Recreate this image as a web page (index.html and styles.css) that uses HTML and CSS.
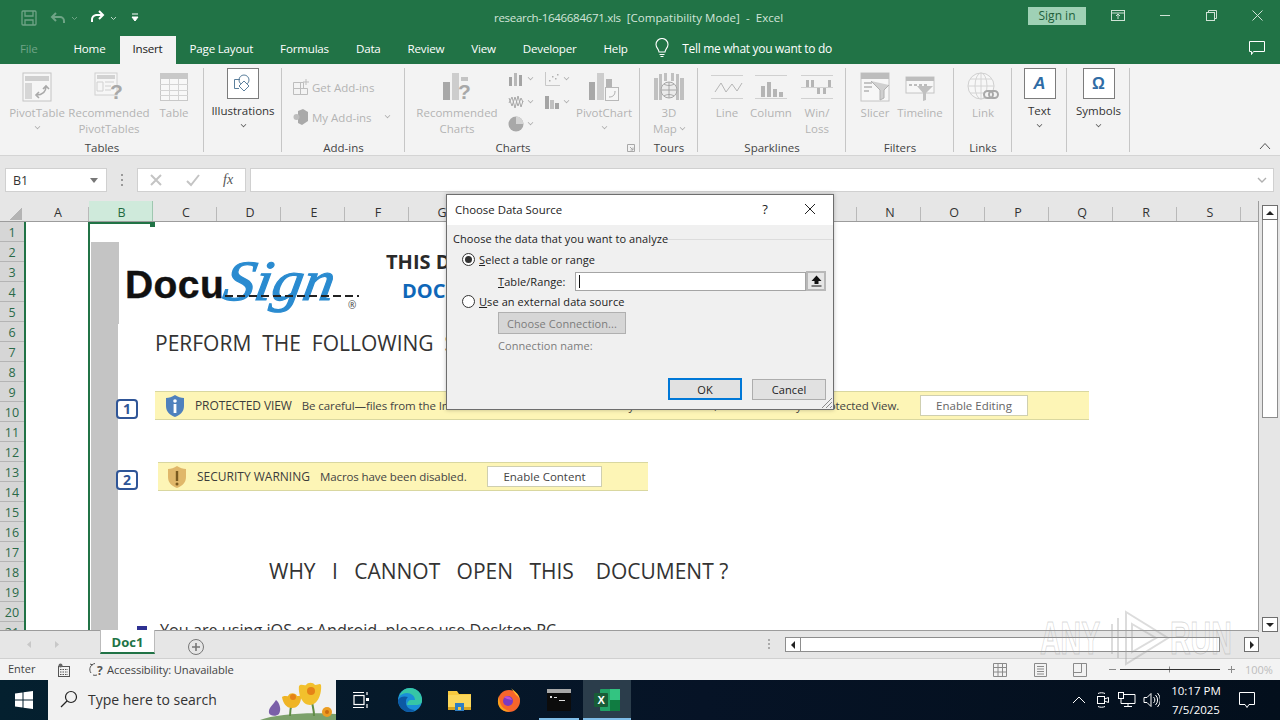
FILE: index.html
```html
<!DOCTYPE html>
<html lang="en">
<head>
<meta charset="utf-8">
<title>research-1646684671.xls [Compatibility Mode] - Excel</title>
<link rel="stylesheet" href="styles.css">
</head>
<body>
<div class="app">
  <header class="titlebar">
    <svg class="qat" width="494" height="36" viewBox="0 0 494 36" fill="none">
      <g stroke="#6fa486" stroke-width="1.3"><rect x="22" y="11" width="14" height="14" rx="1"/><path d="M25 11v5h8v-5M25 25v-5h8v5"/></g>
      <path d="M56 13l-4 4 4 4M52 17h8a4 4 0 0 1 4 4v2" stroke="#6fa486" stroke-width="2"/>
      <path d="M72 17l2.500 2.500L77 17" stroke="#6fa486"/>
      <path d="M99 11l4 4-4 4M103 15h-7a4.500 4.500 0 0 0-4 5v2" stroke="#fff" stroke-width="2"/>
      <path d="M111 17l2.500 2.500L116 17" stroke="#b9d5c4"/>
      <path d="M132 14h6M132 17h6l-3 4z" stroke="#fff" fill="#fff"/>
    </svg>
    <div class="doc-title"><span class="fname">research-1646684671.xls</span><span class="rest">[Compatibility Mode]&nbsp; -&nbsp; Excel</span></div>
    <button class="signin">Sign in</button>
    <svg class="winctl" width="194" height="36" viewBox="0 0 194 36" fill="none" stroke="#cfe3d6">
      <rect x="25.500" y="10.500" width="13" height="10"/><path d="M25.500 13h13M32 19v-5M30 16l2-2 2 2"/>
      <path d="M74 15.500h10"/>
      <rect x="120.500" y="12.500" width="8" height="8"/><path d="M122.500 12.500v-2h8v8h-2"/>
      <path d="M166.500 10.500l10 10M176.500 10.500l-10 10"/>
    </svg>
  </header>

  <nav class="tabs">
    <span class="tab tab-file">File</span>
    <span class="tab">Home</span>
    <span class="tab tab-active">Insert</span>
    <span class="tab">Page Layout</span>
    <span class="tab">Formulas</span>
    <span class="tab">Data</span>
    <span class="tab">Review</span>
    <span class="tab">View</span>
    <span class="tab">Developer</span>
    <span class="tab">Help</span>
    <svg class="bulb" width="16" height="20" viewBox="0 0 16 20" fill="none" stroke="#fff" stroke-width="1.100"><path d="M5 14c0-3-3-4-3-7.500a6 6 0 0 1 12 0C14 10 11 11 11 14zM5.500 16.500h5M6.500 18.500h3"/></svg>
    <span class="tell">Tell me what you want to do</span>
    <svg class="comment" width="18" height="18" viewBox="0 0 18 18" fill="none" stroke="#fff"><path d="M1.500 2.500h15v10H5.500l-2 3v-3h-2z"/></svg>
  </nav>

  <section class="ribbon">
    <div class="group g-tables">
      <div class="g-body">
        <div class="item w56 off">
          <svg class="ic" width="30" height="30" viewBox="0 0 30 30" fill="none"><rect x="1" y="1" width="28" height="28" fill="#f6f6f6" stroke="#c4c4c4"/><rect x="3" y="4" width="24" height="5" fill="#cfcfcf"/><rect x="3" y="11" width="7" height="16" fill="#d6d6d6"/><path d="M14 23c7 0 10-3 10-9M21 17l3-3 3 3M17 20l-3 3 3 3" stroke="#a9a9a9" stroke-width="1.600"/></svg>
          <span class="t">PivotTable</span><span class="chev"></span>
        </div>
        <div class="item w84 off">
          <svg class="ic" width="30" height="30" viewBox="0 0 30 30" fill="none"><rect x="1" y="1" width="22" height="22" fill="#f6f6f6" stroke="#d0d0d0"/><rect x="3" y="3" width="18" height="4" fill="#d2d2d2"/><path d="M3 10h6v9H3zM11 10h9M11 14h6M11 18h6" stroke="#d0d0d0"/><text x="16" y="27" class="svgq">?</text></svg>
          <span class="t">Recommended</span><span class="t">PivotTables</span>
        </div>
        <div class="item w28 off">
          <svg class="ic" width="28" height="30" viewBox="0 0 28 30" fill="none"><rect x="0.500" y="1.500" width="27" height="27" fill="#f8f8f8" stroke="#c8c8c8"/><rect x="0" y="1" width="28" height="6" fill="#c8c8c8"/><path d="M9.500 7v21M18.500 7v21M0 12.500h28M0 18.500h28M0 23.500h28" stroke="#d4d4d4"/></svg>
          <span class="t">Table</span>
        </div>
      </div>
      <div class="g-label">Tables</div>
    </div>

    <div class="group g-illus">
      <div class="g-body">
        <div class="item full">
          <div class="boxed">
            <svg width="20" height="20" viewBox="0 0 20 20" fill="none" stroke="#5b7f9c"><path d="M7 5.500H1.500v9H6"/><circle cx="11" cy="6" r="5"/><path d="M11 7l5 5-5 5-5-5z" fill="#fff"/></svg>
          </div>
          <span class="t dark">Illustrations</span><span class="chev dk"></span>
        </div>
      </div>
      <div class="g-label"></div>
    </div>

    <div class="group g-addins">
      <div class="g-body g-rows">
        <div class="row-item off">
          <svg width="16" height="18" viewBox="0 0 16 18" fill="none" stroke="#bdbdbd"><path d="M0.500 4.500h10v6h-10zM0.500 10.500h7v6h-7zM7.500 10.500h7v6h-7zM7.500 4.500v6M13 1v6M10 4h6"/></svg>
          <span class="t">Get Add-ins</span>
        </div>
        <div class="row-item off">
          <svg width="16" height="18" viewBox="0 0 16 18"><path d="M5 3l5-2 5 3v9l-6 4-4-2z" fill="#a9a9a9"/><circle cx="3.500" cy="9" r="3" fill="#bdbdbd"/></svg>
          <span class="t">My Add-ins</span><span class="chev side"></span>
        </div>
      </div>
      <div class="g-label">Add-ins</div>
    </div>

    <div class="group g-charts">
      <div class="g-body">
        <div class="item w84 off">
          <svg class="ic" width="30" height="30" viewBox="0 0 30 30"><rect x="1" y="10" width="7" height="18" fill="#a8a8a8"/><rect x="10" y="1" width="7" height="27" fill="#cdcdcd"/><rect x="19" y="5" width="7" height="4" fill="#c4c4c4"/><text x="16" y="27" class="svgq">?</text></svg>
          <span class="t">Recommended</span><span class="t">Charts</span>
        </div>
        <div class="minis">
          <div class="mini"><svg width="16" height="16" viewBox="0 0 16 16"><rect x="1" y="6" width="3" height="9" fill="#a4a4a4"/><rect x="6" y="2" width="3" height="13" fill="#b8b8b8"/><rect x="11" y="4" width="3" height="11" fill="#a4a4a4"/></svg><span class="chev side-s"></span></div>
          <div class="mini"><svg width="16" height="16" viewBox="0 0 16 16" fill="none"><path d="M1.500 1v13.500H16" stroke="#c8c8c8"/><g fill="#b0b0b0"><rect x="5" y="9" width="1.500" height="1.500"/><rect x="8" y="5" width="1.500" height="1.500"/><rect x="11" y="7" width="1.500" height="1.500"/><rect x="13" y="3" width="1.500" height="1.500"/></g></svg><span class="chev side-s"></span></div>
          <div class="mini"><svg width="16" height="16" viewBox="0 0 16 16" fill="none" stroke="#a8a8a8"><path d="M1 9l3-6 3 11 3-12 3 11 2-6M1 4l3 8 3-9 3 9 3-8 2 4"/></svg><span class="chev side-s"></span></div>
          <div class="mini"><svg width="16" height="16" viewBox="0 0 16 16"><rect x="1" y="2" width="4" height="13" fill="#a4a4a4"/><rect x="6" y="6" width="4" height="9" fill="#c0c0c0"/><rect x="11" y="9" width="4" height="6" fill="#a4a4a4"/></svg><span class="chev side-s"></span></div>
          <div class="mini"><svg width="16" height="16" viewBox="0 0 16 16"><circle cx="8" cy="8" r="7.500" fill="#a8a8a8"/><path d="M8 8V0.500a7.500 7.500 0 0 1 7.500 7.500z" fill="#d4d4d4"/></svg><span class="chev side-s"></span></div>
        </div>
        <div class="item w56 off">
          <svg class="ic" width="32" height="30" viewBox="0 0 32 30" fill="none"><rect x="1" y="10" width="6" height="18" fill="#a8a8a8"/><rect x="9" y="1" width="7" height="27" fill="#cdcdcd"/><rect x="18" y="7" width="6" height="8" fill="#b4b4b4"/><rect x="17.500" y="15.500" width="13" height="13" fill="#f6f6f6" stroke="#b8b8b8"/><path d="M21 25c4 0 6-2 6-6" stroke="#a8a8a8"/></svg>
          <span class="t">PivotChart</span><span class="chev"></span>
        </div>
      </div>
      <div class="g-label launcher"><span class="lb">Charts</span><svg width="8" height="8" viewBox="0 0 8 8" fill="none" stroke="#a8a8a8"><path d="M0.500 0.500h7v7h-7zM3 3l3 3M6 3.500V6H3.500"/></svg></div>
    </div>

    <div class="group g-tours">
      <div class="g-body">
        <div class="item full off">
          <svg class="ic" width="32" height="30" viewBox="0 0 32 30" fill="none"><g fill="#c0c0c0"><rect x="1" y="6" width="4" height="22"/><rect x="27" y="6" width="4" height="22"/><rect x="6" y="2" width="3" height="26"/><rect x="23" y="2" width="3" height="26"/><rect x="11" y="1" width="3" height="8"/><rect x="18" y="1" width="3" height="8"/></g><circle cx="16" cy="18" r="8" fill="#ebebeb" stroke="#a6a6a6"/><path d="M8 18h16M16 10v16M11 12c3 2 7 2 10 0M11 24c3-2 7-2 10 0" stroke="#a6a6a6"/></svg>
          <span class="t">3D</span><span class="t">Map <span class="chev inl"></span></span>
        </div>
      </div>
      <div class="g-label">Tours</div>
    </div>

    <div class="group g-spark">
      <div class="g-body">
        <div class="item w40 off">
          <svg class="ic" width="32" height="30" viewBox="0 0 32 30" fill="none"><path d="M0 3.500h32M0 26.500h32" stroke="#d0d0d0"/><path d="M4 20l6-9 5 9 6-8 5 7 5-8" stroke="#b5b5b5"/></svg>
          <span class="t">Line</span>
        </div>
        <div class="item w44 off">
          <svg class="ic" width="32" height="30" viewBox="0 0 32 30"><path d="M0 3.500h32M0 26.500h32" stroke="#d0d0d0"/><g fill="#b5b5b5"><rect x="6" y="14" width="4" height="11"/><rect x="12" y="10" width="4" height="15"/><rect x="18" y="17" width="4" height="8"/><rect x="24" y="20" width="4" height="5"/></g></svg>
          <span class="t">Column</span>
        </div>
        <div class="item w40 off">
          <svg class="ic" width="32" height="30" viewBox="0 0 32 30"><path d="M0 3.500h32M0 26.500h32M0 15.500h32" stroke="#d0d0d0"/><g fill="#b5b5b5"><rect x="5" y="8" width="3" height="7"/><rect x="10" y="8" width="3" height="7"/><rect x="16" y="16" width="3" height="6"/><rect x="22" y="16" width="3" height="6"/><rect x="27" y="8" width="3" height="7"/></g></svg>
          <span class="t">Win/</span><span class="t">Loss</span>
        </div>
      </div>
      <div class="g-label">Sparklines</div>
    </div>

    <div class="group g-filters">
      <div class="g-body">
        <div class="item w36 off">
          <svg class="ic" width="30" height="30" viewBox="0 0 30 30" fill="none"><rect x="1" y="1" width="28" height="28" fill="#f7f7f7" stroke="#c4c4c4"/><rect x="1" y="1" width="28" height="6" fill="#bdbdbd"/><path d="M4 11h8M4 15h8M4 19h5" stroke="#c4c4c4" stroke-width="2"/><path d="M11 9l9 9v10l4-2v-8l5-5" fill="#d0d0d0" stroke="#b0b0b0"/></svg>
          <span class="t">Slicer</span>
        </div>
        <div class="item w54 off">
          <svg class="ic" width="30" height="30" viewBox="0 0 30 30" fill="none"><rect x="1" y="5" width="28" height="16" fill="#f7f7f7" stroke="#c4c4c4"/><rect x="1" y="5" width="28" height="4" fill="#bdbdbd"/><path d="M4 13h3M9 13h3M14 13h3M19 13h3" stroke="#bdbdbd" stroke-width="2"/><path d="M12 14l7 0 9 0-7 7v7l-3 1v-8z" fill="#c0c0c0"/></svg>
          <span class="t">Timeline</span>
        </div>
      </div>
      <div class="g-label">Filters</div>
    </div>

    <div class="group g-links">
      <div class="g-body">
        <div class="item full off">
          <svg class="ic" width="32" height="30" viewBox="0 0 32 30" fill="none"><circle cx="14" cy="14" r="13" fill="#f7f7f7" stroke="#cfcfcf"/><path d="M1 14h26M14 1v26M3 7h22M3 21h22" stroke="#d4d4d4"/><ellipse cx="14" cy="14" rx="6" ry="13" stroke="#d4d4d4"/><rect x="17" y="19" width="9" height="7" rx="3.500" stroke="#a8a8a8" stroke-width="2" fill="#f3f3f3"/><rect x="22" y="19" width="9" height="7" rx="3.500" stroke="#a8a8a8" stroke-width="2"/></svg>
          <span class="t">Link</span>
        </div>
      </div>
      <div class="g-label">Links</div>
    </div>

    <div class="group g-text">
      <div class="g-body">
        <div class="item full">
          <div class="boxed glyph glyph-a">A</div>
          <span class="t dark">Text</span><span class="chev dk"></span>
        </div>
      </div>
      <div class="g-label"></div>
    </div>

    <div class="group g-symbols">
      <div class="g-body">
        <div class="item full">
          <div class="boxed glyph">Ω</div>
          <span class="t dark">Symbols</span><span class="chev dk"></span>
        </div>
      </div>
      <div class="g-label"></div>
    </div>

    <div class="collapse">
      <svg width="12" height="8" viewBox="0 0 12 8" fill="none" stroke="#555"><path d="M1 7l5-5.500L11 7"/></svg>
    </div>
  </section>

  <section class="formula">
    <div class="namebox"><span>B1</span><i class="tri"></i></div>
    <div class="fdots"></div>
    <div class="fbtns">
      <svg width="14" height="14" viewBox="0 0 14 14" fill="none" stroke="#c4c4c4" stroke-width="2"><path d="M2 2l10 10M12 2L2 12"/></svg>
      <svg width="14" height="14" viewBox="0 0 14 14" fill="none" stroke="#c4c4c4" stroke-width="2"><path d="M1 8l4 4 8-10"/></svg>
      <span class="fx">fx</span>
    </div>
    <div class="finput">
      <svg width="10" height="6" viewBox="0 0 10 6" fill="none" stroke="#b0b0b0" stroke-width="1.400"><path d="M1 1l4 4 4-4"/></svg>
    </div>
  </section>

  <section class="area">
    <div class="grid">
      <div class="cols">
        <div class="corner"><i></i></div>
        <div class="col">A</div><div class="col col-sel">B</div><div class="col">C</div><div class="col">D</div><div class="col">E</div><div class="col">F</div><div class="col">G</div><div class="col">H</div><div class="col">I</div><div class="col">J</div><div class="col">K</div><div class="col">L</div><div class="col">M</div><div class="col">N</div><div class="col">O</div><div class="col">P</div><div class="col">Q</div><div class="col">R</div><div class="col">S</div>
      </div>
      <div class="body">
        <div class="rows">
          <div class="rn">1</div><div class="rn">2</div><div class="rn">3</div><div class="rn">4</div><div class="rn">5</div><div class="rn">6</div><div class="rn">7</div><div class="rn">8</div><div class="rn">9</div><div class="rn">10</div><div class="rn">11</div><div class="rn">12</div><div class="rn">13</div><div class="rn">14</div><div class="rn">15</div><div class="rn">16</div><div class="rn">17</div><div class="rn">18</div><div class="rn">19</div><div class="rn">20</div><div class="rn">21</div>
        </div>
        <div class="cells">
          <div class="sel"></div>
          <div class="handle"></div>
          <div class="graybar"></div>
          <div class="graybar2"></div>

          <div class="logo">
            <span class="docu">Docu</span><span class="sign">Sign</span>
            <i class="dashes"></i><span class="reg">®</span>
          </div>

          <div class="h-this">THIS DOCUMENT</div>
          <div class="h-doc">DOCUMENT</div>
          <div class="h-perform">PERFORM&nbsp; THE&nbsp; FOLLOWING&nbsp; STEPS</div>

          <div class="badge b1">1</div>
          <div class="banner bn1">
            <svg class="shield" width="20" height="24" viewBox="0 0 20 24"><path d="M10 1c3 2 6 3 9 3v8c0 6-4 9-9 11-5-2-9-5-9-11V4c3 0 6-1 9-3z" fill="#4f81bd"/><rect x="8.600" y="10" width="2.800" height="9" fill="#fff"/><circle cx="10" cy="7" r="1.800" fill="#fff"/></svg>
            <span class="bn-title">PROTECTED VIEW</span>
            <span class="bn-msg">Be careful—files from the Internet can contain viruses. Unless you need to edit, it's safer to stay in Protected View.</span>
            <span class="bn-btn btn-edit">Enable Editing</span>
          </div>

          <div class="badge b2">2</div>
          <div class="banner bn2">
            <svg class="shield" width="20" height="24" viewBox="0 0 20 24"><path d="M10 1c3 2 6 3 9 3v8c0 6-4 9-9 11-5-2-9-5-9-11V4c3 0 6-1 9-3z" fill="#e0b76a"/><rect x="8.800" y="6" width="2.400" height="10" fill="#7a5a20"/><circle cx="10" cy="19" r="1.500" fill="#7a5a20"/></svg>
            <span class="bn-title t2">SECURITY WARNING</span>
            <span class="bn-msg">Macros have been disabled.</span>
            <span class="bn-btn btn-content">Enable Content</span>
          </div>

          <div class="h-why">WHY&nbsp;&nbsp; I&nbsp;&nbsp; CANNOT&nbsp;&nbsp; OPEN&nbsp;&nbsp; THIS&nbsp;&nbsp;&nbsp; DOCUMENT ?</div>
          <div class="bullet"></div>
          <div class="bullet-t">You are using iOS or Android, please use Desktop PC</div>
        </div>
      </div>
    </div>
    <div class="vscroll">
      <div class="sbtn"><i class="ar ar-up"></i></div>
      <div class="vthumb"></div>
      <div class="vtrack"></div>
      <div class="sbtn"><i class="ar ar-down"></i></div>
    </div>
  </section>

  <section class="sheetbar">
    <svg class="navs" width="100" height="27" viewBox="0 0 100 27" fill="#c8c8c8"><path d="M31 10v7l-4-3.500zM55 10v7l4-3.500z"/></svg>
    <div class="sheet-tab">Doc1</div>
    <svg class="plus" width="16" height="16" viewBox="0 0 16 16" fill="none" stroke="#777"><circle cx="8" cy="8" r="7.500"/><path d="M8 4v8M4 8h8" stroke-width="1.600"/></svg>
    <div class="sdots"></div>
    <div class="hscroll">
      <div class="hbtn"><i class="ar ar-left"></i></div>
    </div>
    <div class="hbtn hbtn-r"><i class="ar ar-right"></i></div>
  </section>

  <footer class="status">
    <span class="st-enter">Enter</span>
    <svg class="st-macro" width="14" height="14" viewBox="0 0 14 14" fill="none" stroke="#555"><rect x="1.500" y="3.500" width="11" height="10"/><path d="M3 6.500h8M3 9h8M3 11.500h8" stroke-dasharray="1.500 1"/><circle cx="3.500" cy="2.500" r="2" fill="#666" stroke="none"/></svg>
    <svg class="st-acc" width="17" height="15" viewBox="0 0 17 15" fill="none" stroke="#555"><path d="M6 1.500A6 6 0 0 0 2 11M4 13a6 6 0 0 0 4 0M1 2l3 1"/><text x="8" y="13" class="svgacc">?</text></svg>
    <span class="st-acc-t">Accessibility: Unavailable</span>
    <svg class="st-right" width="290" height="22" viewBox="0 0 290 22" fill="none" stroke="#8a8a8a">
      <path d="M3.500 4.500h13v13h-13zM3.500 8.500h13M3.500 13h13M8 4.500v13M12.500 4.500v13"/>
      <path d="M44.500 4.500h12v13h-12zM47 7.500h7M47 10h7M47 12.500h7M47 15h7"/>
      <path d="M83.500 4.500h13v13h-13zM83.500 13.500h8v-9"/>
      <path d="M119 10.500h7M179.500 7.500v6M238 10.500h7M241.500 7v7"/>
      <path d="M130 10.500h100" stroke="#333"/>
      <text x="255" y="15" class="svgpct">100%</text>
    </svg>
  </footer>

  <div class="taskbar">
    <div class="start">
      <svg width="18" height="18" viewBox="0 0 18 18" fill="#fff"><path d="M0 2.500l7.500-1v7H0zM8.500 1.300l9.500-1.300v8.500H8.500zM0 9.500h7.500v7l-7.500-1zM8.500 9.500H18V18l-9.500-1.300z"/></svg>
    </div>
    <div class="search">
      <svg width="18" height="18" viewBox="0 0 18 18" fill="none" stroke="#222" stroke-width="1.200"><circle cx="11" cy="7" r="5.500"/><path d="M7 11l-6 6"/></svg>
      <span>Type here to search</span>
      <svg class="flowers" width="76" height="40" viewBox="0 0 76 40">
        <path d="M0 40c15-6 50-8 76-6v6z" fill="#7ca16b"/>
        <path d="M16 20c3 2 6 9 3 14-3 3-9 2-10-1-1-5 4-8 7-13z" fill="#7a5fa8"/>
        <path d="M30 36c0-6 1-10 2-14M54 36c0-6-1-8-2-14" stroke="#5f8d45" stroke-width="2"/>
        <path d="M22 17c3-2 5 0 6-1 2-4 8-3 9 0 2 0 4-1 4 1 0 6-3 11-9 11s-9-5-10-11z" fill="#efb425"/>
        <circle cx="33" cy="17" r="3" fill="#e58217"/>
        <path d="M39 6c2-3 5 0 7-1 2-3 7-3 9 0 3 0 5-2 6 0 1 8-3 20-11 20S38 14 39 6z" fill="#f2c02d"/>
        <circle cx="51" cy="11" r="4" fill="#e58217"/>
        <circle cx="67" cy="32" r="5" fill="#ec9d22"/><circle cx="67" cy="32" r="2" fill="#c96c12"/>
      </svg>
    </div>
    <div class="tb-icons">
      <div class="tb"><svg width="16" height="20" viewBox="0 0 16 20" fill="none" stroke="#fff" stroke-width="1.200"><rect x="1" y="5.500" width="10" height="9"/><path d="M0 2.500h11M0 17.500h11M14 2v3M14 14v4"/><rect x="13" y="8" width="3" height="3" fill="#fff" stroke="none"/></svg></div>
      <div class="tb tb-wide"><svg width="24" height="24" viewBox="0 0 24 24"><circle cx="12" cy="12" r="12" fill="#1a8fd8"/><path d="M12 0a12 12 0 0 1 12 13c0 3-3 4-6 4H9c0-3 2-5 4-5h4c0-4-4-7-8-7-3 0-6 1-8 4C3 3 7 0 12 0z" fill="#36c6a6"/><path d="M8 13c-1 5 3 9 9 9-2 1-3 2-5 2A12 12 0 0 1 0 12c2-4 7-4 10-3-1 1-2 2-2 4z" fill="#0c59a4"/></svg></div>
      <div class="tb"><svg width="23" height="22" viewBox="0 0 23 22"><path d="M0 2h9l2 3h12v16H0z" fill="#f7c93f"/><rect x="0" y="6" width="23" height="15" fill="#fbd75b"/><rect x="0" y="18" width="23" height="3" fill="#d9a520"/><rect x="7" y="14" width="9" height="8" fill="#2f7fc4"/><rect x="10" y="18" width="3" height="3" fill="#f7c93f"/></svg></div>
      <div class="tb tb-wide"><svg width="24" height="24" viewBox="0 0 24 24"><circle cx="12" cy="13" r="11" fill="#f7652b"/><path d="M14 0c3 3 9 6 9 14 0-3-2-6-4-7z" fill="#ffbd2e"/><path d="M2 8c0 8 4 14 11 15-5 2-13-2-12-11z" fill="#f9a11b"/><circle cx="11" cy="13" r="5" fill="#7a3ac1"/><path d="M7 9c3-2 7 0 8 3-3-1-5 0-8-3z" fill="#c24fd0"/></svg></div>
      <div class="tb tb-cmd"><svg width="24" height="22" viewBox="0 0 24 22"><rect width="24" height="22" fill="#0c0c0c"/><rect width="24" height="4" fill="#a8a8a8"/><path d="M3 7h2v2H3zM7 8h3v1H7zM12 11h6v1h-6z" fill="#ddd"/></svg></div>
      <div class="tb tb-xl"><svg width="26" height="24" viewBox="0 0 26 24"><rect x="6" y="1" width="20" height="22" rx="1" fill="#21a366"/><rect x="16" y="1" width="10" height="11" fill="#33c481"/><rect x="16" y="12" width="10" height="11" fill="#107c41"/><rect x="0" y="5" width="14" height="14" rx="1" fill="#185c37"/><text x="3.500" y="16" class="svgx">X</text></svg></div>
    </div>
    <div class="tray">
      <svg width="14" height="8" viewBox="0 0 14 8" fill="none" stroke="#fff"><path d="M1 7l6-6 6 6"/></svg>
      <svg class="tray-meet" width="14" height="18" viewBox="0 0 14 18" fill="none" stroke="#fff"><rect x="1.500" y="5.500" width="7" height="7"/><path d="M8.500 8l4-1.500v5l-4-1.500M2 2.500c2-1 5-1 7 0M2 15.500c2 1 5 1 7 0"/></svg>
      <svg class="tray-net" width="18" height="16" viewBox="0 0 18 16" fill="none" stroke="#fff"><path d="M3 2.500h14v9H3zM10 11.500v3M6 14.500h8"/><rect x="0.500" y="0.500" width="5" height="6" fill="#0b1725"/></svg>
      <svg class="tray-vol" width="17" height="16" viewBox="0 0 17 16" fill="none" stroke="#fff"><path d="M1 5.500h3l4-4v13l-4-4H1zM10.500 5a4 4 0 0 1 0 6M12.500 3a7 7 0 0 1 0 10M14.500 1a10 10 0 0 1 0 14"/></svg>
      <div class="clock"><span>10:17 PM</span><span>7/5/2025</span></div>
      <svg class="tray-note" width="16" height="16" viewBox="0 0 16 16" fill="none" stroke="#fff"><path d="M0.500 0.500h15v12H10l-2 3-2-3H0.500z"/></svg>
    </div>
  </div>

  <div class="dialog">
    <div class="dlg-title">
      <span class="dlg-name">Choose Data Source</span>
      <span class="dlg-q">?</span>
      <svg class="dlg-x" width="12" height="12" viewBox="0 0 12 12" fill="none" stroke="#222"><path d="M1 1l10 10M11 1L1 11"/></svg>
    </div>
    <div class="dlg-body">
      <div class="dlg-legend"><span>Choose the data that you want to analyze</span><i></i></div>
      <label class="radio-row first"><i class="radio on"></i><span><u>S</u>elect a table or range</span></label>
      <div class="range-row">
        <span class="range-l"><u>T</u>able/Range:</span>
        <div class="range-in"><i class="caret"></i></div>
        <div class="range-b"><svg width="11" height="12" viewBox="0 0 11 12"><path d="M5.500 0.500L10.500 6H7.500v3h-4V6H0.500zM0.500 10.500h10v1h-10z" fill="#111"/></svg></div>
      </div>
      <label class="radio-row"><i class="radio"></i><span><u>U</u>se an external data source</span></label>
      <button class="conn-btn">Choose Connection...</button>
      <div class="conn-name">Connection name:</div>
      <div class="dlg-foot">
        <button class="dbtn dbtn-ok">OK</button>
        <button class="dbtn">Cancel</button>
      </div>
    </div>
    <svg class="grip" width="12" height="12" viewBox="0 0 12 12" fill="none" stroke="#8a8a8a"><path d="M11 1L1 11M11 5l-6 6M11 9l-2 2"/></svg>
  </div>

  <div class="watermark">
    <span class="wm-t">ANY</span>
    <svg width="60" height="56" viewBox="0 0 60 56" fill="none" stroke="#9a9a9a" stroke-opacity=".35" stroke-width="2"><path d="M2 14v30M8 8v40M16 2l42 26-42 26zM22 14l24 14-24 14z"/></svg>
    <span class="wm-t">RUN</span>
  </div>
</div>
</body>
</html>
```
FILE: styles.css
```css
* { box-sizing: border-box; }
html, body { margin: 0; padding: 0; }
body { font-family: "Open Sans", "Noto Sans", sans-serif; font-size: 12px; color: #333; background: #fff; }
.app { width: 1280px; height: 720px; position: relative; overflow: hidden; display: flex; flex-direction: column; }

.titlebar { height: 36px; background: #217346; display: flex; align-items: center; color: #fff; flex: none; }
.qat { flex: none; }
.doc-title { font-size: 11.500px; color: #d3e5da; flex: 1; white-space: nowrap; padding-bottom: 1px; }
.fname { letter-spacing: -.3px; margin-right: 6px; }
.rest { letter-spacing: .05px; }
.signin { width: 58px; height: 18px; margin-top: -4px; border: 0; padding: 0 0 2px; background: #9fd1b5; color: #1d5f3b; font: 12px "Open Sans", sans-serif; }
.winctl { flex: none; }

.tabs { height: 28px; background: #217346; display: flex; color: #fff; flex: none; align-items: stretch; }
.tab { display: flex; align-items: center; padding: 0 13.500px 4px; font-size: 11.600px; letter-spacing: -.2px; }
.tab-file { width: 60px; padding-left: 20px; color: #6fa486; }
.tab-active { background: #f3f3f3; color: #222; padding: 0 13px 4px 12px; margin: 0 .5px 0 1.500px; }
.bulb { align-self: center; margin: 0 0 4px 13px; }
.tell { align-self: center; margin: 0 0 4px 12px; letter-spacing: -.3px; }
.comment { align-self: center; margin: 0 14px 4px auto; }

.ribbon { height: 92px; background: #f3f3f3; border-bottom: 1px solid #d4d4d4; display: flex; flex: none; }
.group { display: flex; flex-direction: column; padding-top: 8px; flex: none; background: linear-gradient(#c6c6c6, #c6c6c6) right 0 top 4px / 1px 84px no-repeat; }
.g-body { height: 69px; display: flex; align-items: flex-start; }
.g-label { height: 14px; line-height: 14px; text-align: center; color: #444; font-size: 11.500px; }
.g-tables { width: 204px; } .g-tables .g-body { padding-left: 9px; gap: 2px; } .g-tables .w28 { margin-left: 7px; }
.g-illus { width: 78px; }
.g-addins { width: 123px; }
.g-charts { width: 235px; }
.g-charts .g-body { padding-left: 10px; }
.g-tours { width: 58px; }
.g-spark { width: 148px; } .g-spark .g-body { padding-left: 9px; gap: 2px; } .g-spark .w40:last-child { margin-left: 2px; }
.g-filters { width: 108px; } .g-filters .g-body { padding-left: 11px; }
.g-links { width: 58px; }
.g-text { width: 55px; }
.g-symbols { width: 63px; }
.launcher { display: flex; align-items: center; padding-right: 5px; }
.launcher .lb { flex: 1; padding-left: 2px; padding-right: 8px; }

.item { display: flex; flex-direction: column; align-items: center; flex: none; line-height: 16px; }
.w28 { width: 28px; } .w36 { width: 36px; } .w40 { width: 40px; } .w44 { width: 44px; } .w54 { width: 54px; } .w56 { width: 56px; } .w84 { width: 84px; }
.full { width: 100%; }
.ic { height: 30px; margin-bottom: 3px; flex: none; }
.t { white-space: nowrap; font-size: 11.500px; }
.off { color: #b3b3b3; }
.off .t, .row-item .t { color: #b3b3b3; }
.dark { color: #333; }
.chev { width: 5px; height: 5px; border-right: 1px solid #aaa; border-bottom: 1px solid #aaa; transform: rotate(45deg) scale(.8); margin-top: 3px; flex: none; }
.chev.dk { border-color: #555; }
.chev.inl { display: inline-block; margin: 0 0 3px 0; }
.chev.side { margin: 0 0 3px 10px; }
.chev.side-s { margin: 0 0 3px 4px; }
.boxed { width: 32px; height: 31px; margin-top: -4px; margin-bottom: 4px; background: #fff; border: 1px solid #7c7c7c; display: flex; align-items: center; justify-content: center; flex: none; }
.glyph { color: #2f6ca5; font: bold 16px "Liberation Sans", sans-serif; }
.glyph-a { font-style: italic; font-size: 17px; }
.g-rows { flex-direction: column; padding-left: 11px; }
.row-item { height: 30px; display: flex; align-items: center; gap: 3px; }
.minis { width: 70px; margin: -4px -2px 0 9px; display: grid; grid-template-columns: 36px 34px; grid-auto-rows: 22.500px; }
.mini { display: flex; align-items: center; }
.collapse { flex: 1; display: flex; justify-content: flex-end; align-items: flex-end; padding: 0 9px 5px 0; }
.svgq { font: bold 21px "Liberation Sans", sans-serif; fill: #a8a8a8; }

.formula { height: 45px; background: #e6e6e6; display: flex; padding-top: 12px; flex: none; align-items: flex-start; }
.namebox { width: 102px; height: 24px; margin-left: 5px; background: #fff; border: 1px solid #d0d0d0; display: flex; align-items: center; justify-content: space-between; padding: 0 8px 0 7px; font-size: 12.500px; color: #333; }
.tri { width: 0; height: 0; border: 4.500px solid transparent; border-top: 5px solid #777; border-bottom: 0; }
.fdots { width: 2px; height: 12px; margin: 6px 14px 0 14px; background: repeating-linear-gradient(#999 0 2px, transparent 2px 5px); }
.fbtns { width: 109px; height: 24px; background: #fff; border: 1px solid #d0d0d0; display: flex; align-items: center; padding-left: 11px; gap: 23px; }
.fx { font: italic 14px "Liberation Serif", serif; color: #555; }
.finput { width: 1024px; height: 24px; margin-left: 4px; background: #fff; border: 1px solid #d0d0d0; display: flex; align-items: center; justify-content: flex-end; padding-right: 6px; }

.area { height: 429px; display: flex; flex: none; align-items: flex-start; position: relative; z-index: 1; }
.grid { width: 1258px; height: 429px; display: flex; flex-direction: column; overflow: hidden; }
.cols { height: 21px; background: #e6e6e6; border-bottom: 1px solid #9c9c9c; display: flex; flex: none; }
.corner { width: 25px; padding: 7px 3px 0 10px; }
.corner i { display: block; width: 12px; height: 12px; background: linear-gradient(135deg, transparent 50%, #b4b4b4 50%); }
.col { width: 64px; padding-left: 2px; text-align: center; line-height: 23px; font-size: 12.500px; color: #333; background: linear-gradient(#b9b9b9, #b9b9b9) right bottom / 1px 14px no-repeat; }
.col-sel { background: #cfeadb; color: #1f6a41; border-right: 1px solid #9fc7b0; }
.body { flex: 1; display: flex; background: #fff; min-height: 0; }
.rows { width: 26px; flex: none; background: #d6d6d6; border-right: 2px solid #217346; }
.rn { height: 20px; line-height: 22px; text-align: center; font-size: 12.500px; color: #2a6a48; border-bottom: 1px solid #b4b4b4; }
.cells { flex: 1; position: relative; margin-left: -1px; }

.sel { position: absolute; left: 63px; top: 0; width: 64px; height: 420px; border-left: 2px solid #217346; border-top: 2px solid #217346; }
.handle { position: absolute; left: 125px; top: 0; width: 5px; height: 5px; background: #217346; }
.graybar { position: absolute; left: 66px; top: 20px; width: 28px; height: 82px; background: #c4c4c4; }
.graybar2 { position: absolute; left: 66px; top: 102px; width: 27px; height: 320px; background: #c4c4c4; }

.logo { position: absolute; left: 100px; top: 32px; width: 240px; height: 64px; }
.docu { position: absolute; left: 0; top: 9px; font: bold 39px/44px "Liberation Sans", sans-serif; color: #111; letter-spacing: .4px; -webkit-text-stroke: .4px #111; }
.sign { position: absolute; left: 100px; top: -8px; font: italic 62px/70px "Liberation Serif", serif; color: #2a8bd0; -webkit-text-stroke: 1.300px #2a8bd0; transform: skewX(-10deg) scaleY(.92); transform-origin: left center; }
.dashes { position: absolute; left: 100px; top: 41px; width: 134px; height: 2px; background: repeating-linear-gradient(90deg, #222 0 8px, transparent 8px 12px); }
.reg { position: absolute; left: 223px; top: 44px; font-size: 10px; color: #444; }

.h-this { position: absolute; left: 361px; top: 27px; font-size: 20px; font-weight: 700; line-height: 26px; color: #2a2a2a; white-space: nowrap; }
.h-doc { position: absolute; left: 377px; top: 56px; font-size: 20px; font-weight: 700; line-height: 26px; color: #0f67b8; white-space: nowrap; }
.h-perform { position: absolute; left: 130px; top: 106px; font-size: 21px; line-height: 30px; color: #333; white-space: nowrap; }

.badge { position: absolute; left: 91px; width: 22px; height: 20px; border: 2px solid #2f5597; border-radius: 4px; color: #2f5597; font: bold 14px/16px "Open Sans", sans-serif; text-align: center; }
.b1 { top: 177px; }
.b2 { top: 248px; }
.banner { position: absolute; display: flex; align-items: center; background: #fdf5b6; border-top: 1px solid #d9d7a0; border-bottom: 1px solid #d9d7a0; white-space: nowrap; }
.bn1 { left: 130px; top: 169px; width: 934px; height: 29px; padding-left: 10px; }
.bn2 { left: 133px; top: 240px; width: 490px; height: 29px; padding-left: 9px; }
.shield { flex: none; }
.bn-title { margin-left: 10px; font-size: 12px; color: #3c3c3c; letter-spacing: -.1px; }
.bn-msg { margin-left: 10px; font-size: 11.500px; color: #444; letter-spacing: -.1px; }
.t2 { letter-spacing: 0; }
.bn-btn { background: #fff; border: 1px solid #cfcfb0; height: 21px; display: flex; align-items: center; justify-content: center; font-size: 11.500px; color: #444; flex: none; }
.btn-edit { width: 108px; position: absolute; left: 765px; top: 3px; color: #666; }
.btn-content { width: 115px; position: absolute; left: 329px; top: 3px; }

.h-why { position: absolute; left: 244px; top: 334px; font-size: 21px; line-height: 30px; color: #333; white-space: nowrap; }
.bullet { position: absolute; left: 112px; top: 404px; width: 10px; height: 10px; background: #2e3192; }
.bullet-t { position: absolute; left: 135px; top: 397px; font-size: 16.200px; line-height: 22px; color: #333; white-space: nowrap; }

.vscroll { width: 22px; height: 431px; flex: none; background: #e6e6e6; border-left: 1px solid #9c9c9c; padding: 4px 2px 0 3px; display: flex; flex-direction: column; }
.sbtn { height: 15px; background: #fff; border: 1px solid #6f6f6f; display: flex; align-items: center; justify-content: center; flex: none; }
.vthumb { height: 198px; background: #fff; border: 1px solid #8d8d8d; border-top: 0; flex: none; }
.vtrack { flex: 1; }
.ar { display: block; width: 0; height: 0; border: 4px solid transparent; }
.ar-up { border-bottom: 4px solid #222; border-top: 0; }
.ar-down { border-top: 4px solid #222; border-bottom: 0; }
.ar-left { border-right: 4px solid #222; border-left: 0; }
.ar-right { border-left: 4px solid #222; border-right: 0; }

.sheetbar { height: 28px; background: #e6e6e6; border-top: 1px solid #9c9c9c; display: flex; align-items: flex-start; flex: none; }
.navs { flex: none; }
.sheet-tab { width: 55px; height: 24px; margin-top: -1px; background: #fff; border-bottom: 2px solid #217346; border-left: 1px solid #bbb; border-right: 1px solid #bbb; color: #217346; font-weight: 700; font-size: 13px; line-height: 24px; text-align: center; }
.plus { margin: 8px 0 0 33px; flex: none; }
.sdots { width: 2px; height: 12px; margin: 8px 15px 0 564px; background: repeating-linear-gradient(#aaa 0 2px, transparent 2px 4px); }
.hscroll { width: 435px; height: 15px; margin-top: 6px; background: #fff; border: 1px solid #8d8d8d; flex: none; }
.hbtn { width: 15px; height: 13px; background: #fff; border-right: 1px solid #8d8d8d; display: flex; align-items: center; justify-content: center; }
.hbtn-r { height: 15px; margin: 6px 0 0 24px; border: 1px solid #6f6f6f; }

.status { height: 22px; background: #f3f3f3; display: flex; align-items: center; border-top: 1px solid #d0d0d0; flex: none; font-size: 11px; color: #444; }
.st-enter { margin-left: 8px; width: 49px; padding-bottom: 2px; }
.st-macro { margin-right: 18px; }
.st-acc-t { margin-left: 1px; font-size: 11.200px; letter-spacing: -.1px; }
.st-right { margin-left: auto; flex: none; }
.svgacc { font: bold 12px "Open Sans", sans-serif; fill: #555; stroke: none; }
.svgpct { font: 11px "Open Sans", sans-serif; fill: #bdbdbd; stroke: none; }

.taskbar { height: 40px; background: linear-gradient(90deg, #04202f, #061326 55%, #030f1c); display: flex; flex: none; align-items: stretch; }
.start { width: 48px; display: flex; align-items: center; justify-content: center; }
.search { width: 288px; background: #f1f1f1; display: flex; align-items: center; padding: 0 0 2px 12px; gap: 10px; position: relative; overflow: hidden; font-size: 14px; color: #333; }
.flowers { position: absolute; right: 0; top: 0; }
.tb-icons { display: flex; }
.tb { width: 49px; display: flex; align-items: center; justify-content: center; }
.tb-wide { width: 50px; }
.tb-cmd { background: linear-gradient(#7fbde8, #7fbde8) center bottom / 40px 2px no-repeat; }
.tb-xl { width: 48px; background: linear-gradient(#7fbde8, #7fbde8) center bottom / 48px 2px no-repeat, #2b3d4b; }
.svgx { font: bold 11px "Liberation Sans", sans-serif; fill: #fff; }
.tray { margin-left: auto; display: flex; align-items: center; color: #fff; padding-right: 25px; }
.tray-meet { margin-left: 10px; }
.tray-net { margin-left: 8px; }
.tray-vol { margin-left: 7px; }
.clock { display: flex; flex-direction: column; align-items: center; margin-left: 11px; width: 50px; font-size: 11.500px; line-height: 19px; white-space: nowrap; }
.tray-note { margin-left: 18px; }

.dialog { position: absolute; left: 446px; top: 194px; width: 388px; height: 216px; background: #f0f0f0; border: 1px solid #6e6e6e; box-shadow: 0 0 4px rgba(0,0,0,.25); z-index: 5; display: flex; flex-direction: column; font-size: 11px; color: #222; letter-spacing: .08px; }
.dlg-title { height: 30px; background: #fff; display: flex; align-items: center; padding: 0 0 2px 8px; flex: none; }
.dlg-name { font-size: 11.400px; letter-spacing: 0; flex: 1; }
.dlg-q { font-size: 13px; margin-right: 36px; }
.dlg-x { margin-right: 17px; }
.dlg-body { padding: 7px 7px 0 6px; flex: 1; }
.dlg-legend { display: flex; align-items: center; line-height: 14px; height: 14px; }
.dlg-legend i { flex: 1; height: 1px; background: #dcdcdc; margin-right: -7px; }
.radio-row { display: flex; align-items: center; gap: 4px; height: 14px; margin: 6px 0 0 9px; }
.radio-row + .range-row + .radio-row { margin-top: 3px; }
.radio { width: 13px; height: 13px; border-radius: 50%; border: 1px solid #333; background: #fff; display: flex; align-items: center; justify-content: center; flex: none; }
.radio.on::after { content: ""; width: 7px; height: 7px; border-radius: 50%; background: #333; }
.range-row { display: flex; align-items: center; height: 20px; margin: 5px 0 0 45px; }
.range-l { width: 77px; }
.range-in { width: 231px; height: 19px; background: #fff; border: 1px solid #a5a5a5; display: flex; align-items: center; padding-left: 3px; }
.caret { width: 1px; height: 13px; background: #111; }
.range-b { width: 20px; height: 20px; background: #e6e6e6; border: 2px solid #b8b8b8; display: flex; align-items: center; justify-content: center; }
.conn-btn { display: block; width: 128px; height: 22px; margin: 4px 0 0 45px; padding: 0; background: #d6d6d6; border: 1px solid #b0b0b0; color: #7c7c7c; font: 11px "Open Sans", sans-serif; letter-spacing: .08px; }
.conn-name { margin: 5px 0 0 45px; line-height: 14px; color: #7c7c7c; }
.dlg-foot { display: flex; justify-content: flex-end; align-items: center; gap: 10px; margin-top: 25px; }
.dbtn { width: 74px; height: 21px; padding: 0; background: #e1e1e1; border: 1px solid #adadad; color: #222; font: 11px "Open Sans", sans-serif; letter-spacing: .08px; }
.dbtn-ok { height: 22px; border: 2px solid #0078d7; }
.grip { position: absolute; right: 0; bottom: 0; }

.watermark { position: absolute; left: 1040px; top: 609px; width: 200px; height: 58px; display: flex; align-items: center; pointer-events: none; z-index: 6; }
.wm-t { font: bold 46px/46px "Liberation Sans", sans-serif; color: transparent; -webkit-text-stroke: 1px rgba(150,150,150,.38); transform: scaleX(.62); transform-origin: left center; width: 70px; flex: none; }
.wm-t:last-child { width: 62px; }
```
